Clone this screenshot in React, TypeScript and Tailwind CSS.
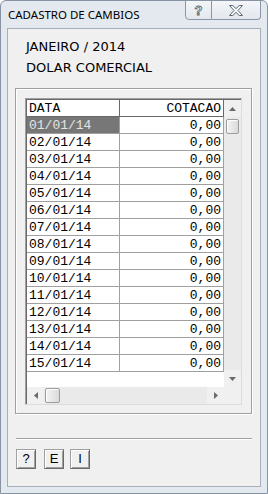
import React from "react";

const rows = Array.from({ length: 15 }, (_, i) => `${String(i + 1).padStart(2, "0")}/01/14`);

function Arrow({ dir }: { dir: "up" | "down" | "left" | "right" }) {
    const pts = {
        up: "0,4 7,4 3.5,0",
        down: "0,0 7,0 3.5,4",
        left: "4,0 4,7 0,3.5",
        right: "0,0 0,7 4,3.5",
    }[dir];
    const w = dir === "up" || dir === "down" ? 7 : 4;
    const h = dir === "up" || dir === "down" ? 4 : 7;
    return (
        <svg width={w} height={h} viewBox={`0 0 ${w} ${h}`}>
            <polygon points={pts} fill="#6a6a6a" />
        </svg>
    );
}

function Thumb({ className }: { className: string }) {
    return (
        <div
            className={`rounded-[2px] border border-[#9c9c9c] bg-gradient-to-r from-[#f4f4f4] to-[#dadada] shadow-[inset_1px_1px_0_#fff] ${className}`}
        />
    );
}

export default function App() {
    return (
        <div className="w-[268px] h-[494px] flex flex-col bg-[#e4e9ef] border border-[#8793a3] rounded-t-[6px] overflow-hidden font-['DejaVu_Sans',sans-serif]">
            {/* title bar */}
            <div className="h-[27px] flex justify-between shrink-0">
                <span className="pl-[7px] self-center text-[11.5px] text-black font-['Noto_Sans',sans-serif] leading-none">
                    CADASTRO DE CAMBIOS
                </span>
                <div className="flex mr-[6px] -mt-px">
                    <div className="w-[27px] h-[20px] border border-[#8a96a6] rounded-bl-[4px] bg-gradient-to-b from-[#f3f5f8] to-[#e3e8ee] flex items-center justify-center">
                        <span className="text-[13px] font-bold leading-none text-[#f6f8fa] [-webkit-text-stroke:0.8px_#58626d] font-['Liberation_Sans',sans-serif]">
                            ?
                        </span>
                    </div>
                    <div className="w-[49px] h-[20px] border border-l-0 border-[#8a96a6] rounded-br-[4px] bg-gradient-to-b from-[#f3f5f8] to-[#e3e8ee] flex items-center justify-center">
                        <svg width="14" height="11" viewBox="0 0 14 11">
                            <polygon
                                points="0.5,0.5 3.8,0.5 7,3.6 10.2,0.5 13.5,0.5 9,5.5 13.5,10.5 10.2,10.5 7,7.4 3.8,10.5 0.5,10.5 5,5.5"
                                fill="#f4f6f9"
                                stroke="#5c6671"
                                strokeWidth="1"
                            />
                        </svg>
                    </div>
                </div>
            </div>

            {/* client area */}
            <div className="flex-1 mx-[6px] mb-[6px] border border-[#a5aeb9] bg-[#f0f0f0] flex flex-col">
                <div className="pt-[7px] pl-[18px] text-[13px] text-black">
                    <div className="h-[21px] leading-[21px]">JANEIRO / 2014</div>
                    <div className="h-[21px] leading-[21px]">DOLAR COMERCIAL</div>
                </div>

                {/* panel */}
                <div className="mt-[10px] ml-[7px] mr-[8px] h-[326px] border border-[#a0a0a0] shadow-[inset_1px_1px_0_#fff,1px_1px_0_#fff] pt-[9px] pl-[9px]">
                    <div className="w-[217px] h-[307px] border border-[#a0a0a0] border-b-[#dcdcdc] border-r-[#dcdcdc]">
                        <div className="w-full h-full border-l border-t border-[#696969] flex flex-col bg-white">
                            <div className="flex flex-1">
                                {/* cells */}
                                <div className="w-[197px] flex flex-col font-['Liberation_Mono',monospace] text-[13px] text-black">
                                    <div className="flex h-[17px]">
                                        <div className="w-[93px] border-r border-b border-[#696969] pl-[2px] leading-[17px]">DATA</div>
                                        <div className="w-[104px] border-r border-b border-[#696969] pr-[2px] text-right leading-[17px]">
                                            COTACAO
                                        </div>
                                    </div>
                                    {rows.map((d, i) => (
                                        <div key={d} className="flex h-[17px]">
                                            <div
                                                className={`w-[93px] border-r border-b border-[#a0a0a0] pl-[2px] leading-[17px] ${
                                                    i === 0 ? "bg-[#777777] text-[#e4e4e4]" : ""
                                                }`}
                                            >
                                                {d}
                                            </div>
                                            <div className="w-[104px] border-r border-b border-[#a0a0a0] pr-[2px] text-right leading-[17px]">
                                                0,00
                                            </div>
                                        </div>
                                    ))}
                                </div>
                                {/* vertical scrollbar */}
                                <div className="w-[17px] flex flex-col bg-[#eaeaea]">
                                    <div className="h-[17px] flex items-center justify-center bg-[#f0f0f0]">
                                        <Arrow dir="up" />
                                    </div>
                                    <Thumb className="mx-[2px] mt-[2px] h-[15px]" />
                                    <div className="flex-1" />
                                    <div className="h-[17px] flex items-center justify-center bg-[#f0f0f0]">
                                        <Arrow dir="down" />
                                    </div>
                                </div>
                            </div>
                            {/* horizontal scrollbar */}
                            <div className="h-[17px] flex shrink-0">
                                <div className="w-[197px] flex bg-[#eaeaea]">
                                    <div className="w-[17px] flex items-center justify-center bg-[#f0f0f0]">
                                        <Arrow dir="left" />
                                    </div>
                                    <Thumb className="my-[1px] ml-[1px] w-[15px]" />
                                    <div className="flex-1" />
                                    <div className="w-[17px] flex items-center justify-center bg-[#f0f0f0]">
                                        <Arrow dir="right" />
                                    </div>
                                </div>
                                <div className="w-[17px] bg-[#f0f0f0]" />
                            </div>
                        </div>
                    </div>
                </div>

                {/* separator */}
                <div className="mt-[24px] ml-[8px] mr-[8px] border-t border-[#a0a0a0] shadow-[0_1px_0_#fff]" />

                {/* buttons */}
                <div className="mt-[10px] ml-[8px] flex font-['Liberation_Sans',sans-serif] text-[13px] text-black">
                    {["?", "E", "I"].map((b, i) => (
                        <div
                            key={b}
                            className={`w-[20px] h-[20px] flex items-center justify-center border border-[#a0a0a0] border-r-[#696969] border-b-[#696969] bg-[#f0f0f0] shadow-[inset_1px_1px_0_#fff,inset_-1px_-1px_0_#a0a0a0] ${
                                i === 1 ? "ml-[8px]" : i === 2 ? "ml-[6px]" : ""
                            }`}
                        >
                            {b}
                        </div>
                    ))}
                </div>
            </div>
        </div>
    );
}
